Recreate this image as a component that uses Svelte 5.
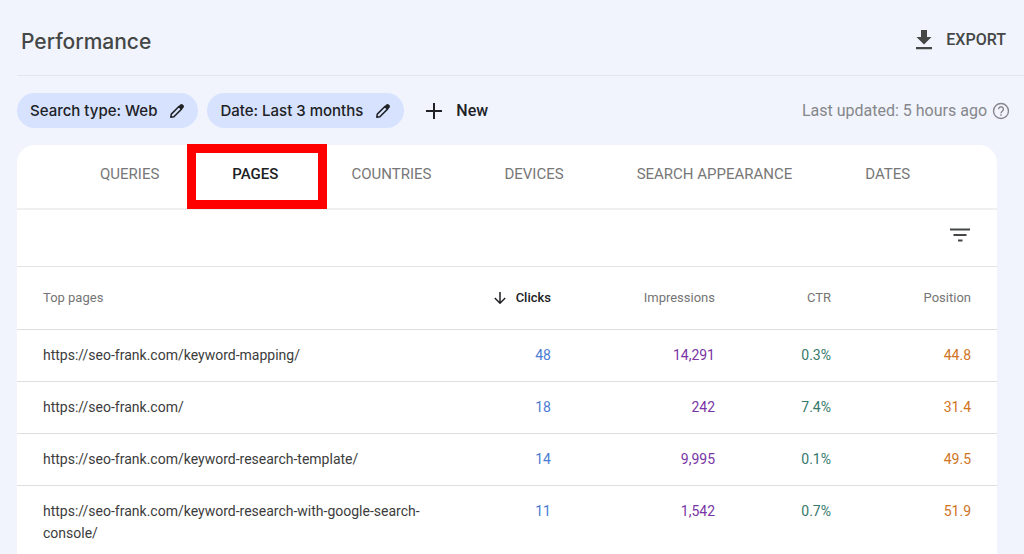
<script>
  const filters = ['Search type: Web', 'Date: Last 3 months'];
  const tabs = ['QUERIES', 'PAGES', 'COUNTRIES', 'DEVICES', 'SEARCH APPEARANCE', 'DATES'];
  const rows = [
    { url: 'https://seo-frank.com/keyword-mapping/', clicks: '48', impressions: '14,291', ctr: '0.3%', position: '44.8' },
    { url: 'https://seo-frank.com/', clicks: '18', impressions: '242', ctr: '7.4%', position: '31.4' },
    { url: 'https://seo-frank.com/keyword-research-template/', clicks: '14', impressions: '9,995', ctr: '0.1%', position: '49.5' },
    { url: 'https://seo-frank.com/keyword-research-with-google-search-console/', clicks: '11', impressions: '1,542', ctr: '0.7%', position: '51.9' }
  ];
  let active = $state('PAGES');
</script>

<main class="page">
  <header class="header">
    <h1>Performance</h1>
    <button class="export" type="button">
      <svg width="16" height="20" viewBox="0 0 16 20" aria-hidden="true">
        <path d="M5 0h6v7h4.500L8 14.500.5 7H5zM0 17h16v2.200H0z" fill="currentColor" />
      </svg>
      EXPORT
    </button>
  </header>

  <div class="filters">
    {#each filters as filter}
      <button class="chip" type="button">
        {filter}
        <svg width="16" height="16" viewBox="0 0 16 16" aria-hidden="true">
          <path d="M1.800 14.200l.5-3.100 7.600-7.600 2.600 2.600-7.600 7.600z" fill="none" stroke="currentColor" stroke-width="1.500" stroke-linejoin="round" />
          <path d="M9.300 3.500l2-2q1.200-1 2.400.1l.7.7q1.100 1.200.1 2.400l-2 2z" fill="currentColor" />
        </svg>
      </button>
    {/each}
    <button class="new" type="button">
      <svg width="16" height="16" viewBox="0 0 16 16" aria-hidden="true">
        <path d="M8 0v16M0 8h16" stroke="currentColor" stroke-width="2" />
      </svg>
      New
    </button>
    <p class="updated">
      Last updated: 5 hours ago
      <svg width="18" height="18" viewBox="0 0 18 18" fill="none" stroke="currentColor" aria-hidden="true">
        <circle cx="9" cy="9" r="7.500" stroke-width="1.400" />
        <path d="M6.600 7.200a2.400 2.400 0 1 1 3.700 2c-.8.600-1.300 1-1.300 2" stroke-width="1.400" />
        <path d="M9 12.200v1.500" stroke-width="1.500" />
      </svg>
    </p>
  </div>

  <section class="card">
    <div class="tabs" role="tablist">
      {#each tabs as tab}
        <button class="tab" class:active={tab === active} type="button" role="tab" aria-selected={tab === active} onclick={() => (active = tab)}>{tab}</button>
      {/each}
    </div>
    <div class="toolbar">
      <button class="filter" type="button" aria-label="Filter rows">
        <svg width="20" height="14" viewBox="0 0 20 14" aria-hidden="true">
          <path d="M0 1.500h20M3.500 7h13M8 12.500h4.500" stroke="currentColor" stroke-width="2" />
        </svg>
      </button>
    </div>
    <table>
      <colgroup>
        <col /><col class="c-clicks" /><col class="c-impressions" /><col class="c-ctr" /><col class="c-position" />
      </colgroup>
      <thead>
        <tr>
          <th scope="col">Top pages</th>
          <th scope="col" class="sorted" aria-sort="descending">
            <svg width="12" height="12" viewBox="0 0 12 12" aria-hidden="true">
              <path d="M6 0v11M.8 6L6 11.200 11.200 6" fill="none" stroke="currentColor" stroke-width="1.500" />
            </svg>Clicks
          </th>
          <th scope="col">Impressions</th>
          <th scope="col">CTR</th>
          <th scope="col">Position</th>
        </tr>
      </thead>
      <tbody>
        {#each rows as row}
          <tr>
            <td>{row.url}</td>
            <td class="clicks">{row.clicks}</td>
            <td class="impressions">{row.impressions}</td>
            <td class="ctr">{row.ctr}</td>
            <td class="position">{row.position}</td>
          </tr>
        {/each}
      </tbody>
    </table>
  </section>
</main>

<style>
  :global(body) {
    background: #f1f4fd;
    overflow: hidden;
  }
  .page {
    padding-left: 17px;
    font-family: Roboto, sans-serif;
    color: #202124;
  }
  button {
    border: 0;
    padding: 0;
    background: none;
    font: inherit;
    color: inherit;
    cursor: pointer;
  }
  svg {
    flex: none;
  }
  .header {
    display: flex;
    align-items: center;
    justify-content: space-between;
    height: 76px;
    padding: 4px 18px 0 4px;
    box-sizing: border-box;
    border-bottom: 1px solid #e4e7ea;
    color: #444746;
  }
  h1 {
    margin: 0;
    padding-top: 4px;
    font: 500 21px/28px Inter, sans-serif;
  }
  .export {
    display: flex;
    align-items: center;
    gap: 14px;
    font-size: 16px;
    font-weight: 500;
  }
  .filters {
    display: flex;
    align-items: center;
    gap: 9px;
    padding: 17px 14px 17px 0;
  }
  .chip {
    display: flex;
    align-items: center;
    gap: 12px;
    height: 35px;
    padding: 0 13px;
    border-radius: 18px;
    background: #d6e2fe;
    font: 500 15px/20px Inter, sans-serif;
  }
  .new {
    display: flex;
    align-items: center;
    gap: 14px;
    margin-left: 13px;
    font-size: 16px;
    font-weight: 500;
  }
  .updated {
    display: flex;
    align-items: center;
    gap: 5px;
    margin: 0 0 0 auto;
    font-size: 16px;
    color: #85878a;
  }
  .card {
    margin-right: 27px;
    border-radius: 18px 18px 0 0;
    background: #fff;
  }
  .tabs {
    display: flex;
    padding-left: 47px;
    border-bottom: 2px solid #f0f0f0;
  }
  .tab {
    position: relative;
    height: 63px;
    padding: 0 37px 6px 36px;
    font-size: 15px;
    color: #777;
    white-space: nowrap;
  }
  .tab.active {
    color: #202124;
    font-weight: 500;
  }
  .tab.active::after {
    content: '';
    position: absolute;
    inset: -1px -12px -1px -9px;
    border: 9px solid #f00;
  }
  .toolbar {
    display: flex;
    align-items: center;
    justify-content: flex-end;
    height: 56px;
    padding: 0 27px 6px 0;
    box-sizing: border-box;
    color: #444746;
  }
  .filter {
    display: flex;
  }
  table {
    width: 100%;
    table-layout: fixed;
    border-collapse: separate;
    border-spacing: 0;
    font-size: 14px;
    line-height: 22px;
  }
  .c-clicks { width: 114px; }
  .c-impressions { width: 164px; }
  .c-ctr { width: 116px; }
  .c-position { width: 166px; }
  th,
  td {
    padding: 0;
    text-align: right;
    vertical-align: top;
  }
  th {
    height: 62px;
    border-top: 1px solid #e4e4e4;
    font-size: 13px;
    font-weight: 400;
    color: #757575;
    vertical-align: middle;
  }
  th:first-child,
  td:first-child {
    padding-left: 26px;
    text-align: left;
  }
  th:last-child,
  td:last-child {
    padding-right: 26px;
  }
  .sorted {
    color: #202124;
    font-weight: 500;
  }
  .sorted svg {
    margin-right: 10px;
    vertical-align: -2px;
  }
  td {
    padding: 14px 0 15px;
    border-top: 1px solid #dedede;
    color: #3c3c3c;
  }
  td.clicks { color: #4a7cd4; }
  td.impressions { color: #7a35a5; }
  td.ctr { color: #35796a; }
  td.position { color: #d07423; }
</style>
